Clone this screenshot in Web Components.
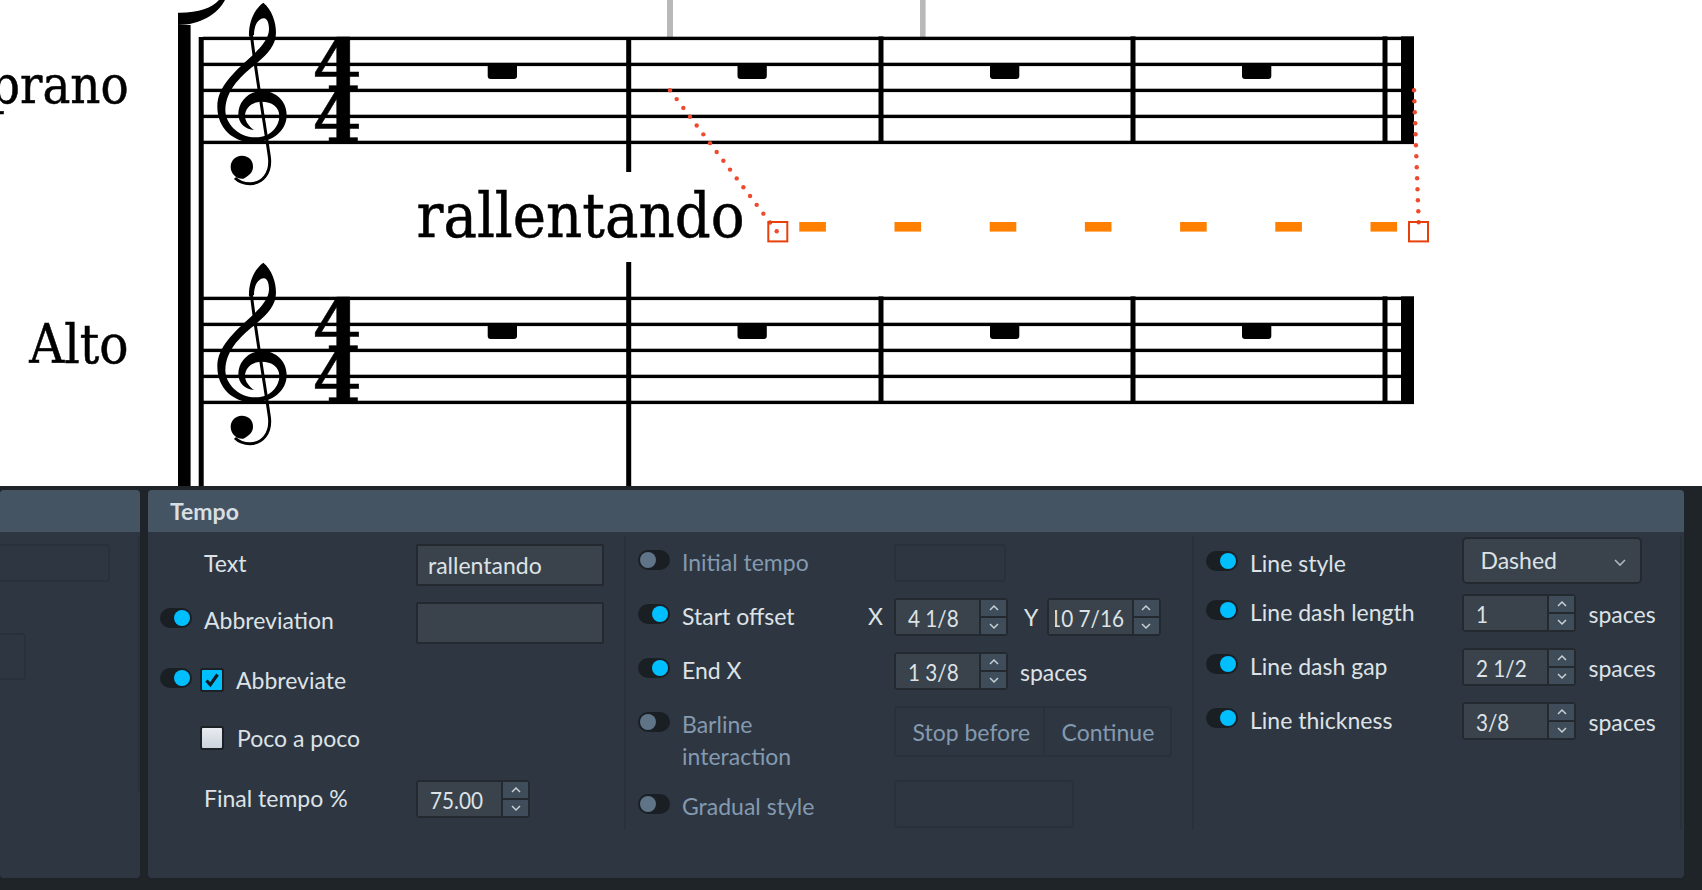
<!DOCTYPE html>
<html>
<head>
<meta charset="utf-8">
<style>
  html, body { margin: 0; height: 100%; overflow: hidden; background: #1f2429; }
  body { font-family: Lato, 'Noto Sans', sans-serif; font-size: 23px; color: #dde2e6; }
  .page { display: flex; flex-direction: column; width: 1702px; height: 890px; overflow: hidden; }
  .dock { display: flex; gap: 8px; padding-top: 4px; height: 388px; padding-right: 18px; }
  .body-l { display: flex; flex-direction: column; }
  .ghost-a { margin: 12px 0 0 -60px; width: 170px; height: 38px; }
  .ghost-b { margin: 51px 0 0 -60px; width: 86px; height: 47px; }
</style>
</head>
<body>
<div class="page">
  <score-view></score-view>
  <div class="dock">
    <dock-panel style="width:140px" rule="256">
      <div class="body-l">
        <field-box class="ghost-a" off></field-box>
        <field-box class="ghost-b" off></field-box>
      </div>
    </dock-panel>
    <dock-panel style="flex:1" title="Tempo">
      <prop-col style="width:476px;--pad:8px" first>
        <prop-row style="--h:42px">
          <span style="margin-bottom:2px">Text</span>
          <field-box slot="field" value="rallentando" style="width:188px;height:42px"></field-box>
        </prop-row>
        <prop-row style="--h:42px;margin-top:16px">
          <prop-toggle slot="toggle" on style="margin-bottom:10px"></prop-toggle>
          <span style="margin-bottom:4px">Abbreviation</span>
          <field-box slot="field" value="" style="width:188px;height:42px"></field-box>
        </prop-row>
        <prop-row style="--h:24px;margin-top:24px">
          <prop-toggle slot="toggle" on style="margin-bottom:4px"></prop-toggle>
          <prop-check checked style="margin:2px 12px 0 -4px"></prop-check>
          <span style="margin-top:2px">Abbreviate</span>
        </prop-row>
        <prop-row style="--h:24px;margin-top:34px">
          <prop-check style="margin:2px 13px 0 -4px"></prop-check>
          <span style="margin-top:2px">Poco a poco</span>
        </prop-row>
        <prop-row style="--h:38px;margin-top:30px">
          <span>Final tempo %</span>
          <spin-box slot="field" value="75.00" style="--tx:12px"></spin-box>
        </prop-row>
      </prop-col>
      <prop-col style="width:568px;--pad:8px">
        <prop-row off>
          <prop-toggle slot="toggle"></prop-toggle>
          <span>Initial tempo</span>
          <field-box slot="field" off style="width:112px;height:38px"></field-box>
        </prop-row>
        <prop-row style="margin-top:16px">
          <prop-toggle slot="toggle" on></prop-toggle>
          <span style="flex:1">Start offset</span>
          <span style="margin-right:11px">X</span>
          <spin-box slot="field" value="4 1/8"></spin-box>
          <span slot="unit" style="display:flex;align-items:center;margin-left:16px">
            <span style="width:22.5px">Y</span>
            <spin-box value="10 7/16" clip></spin-box>
          </span>
        </prop-row>
        <prop-row style="margin-top:16px">
          <prop-toggle slot="toggle" on></prop-toggle>
          <span>End X</span>
          <spin-box slot="field" value="1 3/8"></spin-box>
          <span slot="unit" style="margin:2px 0 0 12px">spaces</span>
        </prop-row>
        <prop-row off top style="--h:51px;margin-top:16px">
          <prop-toggle slot="toggle" style="margin:6px 0 0"></prop-toggle>
          <span style="margin-top:2px">Barline<br>interaction</span>
          <seg-buttons slot="field">
            <span>Stop before</span>
            <span>Continue</span>
          </seg-buttons>
        </prop-row>
        <prop-row off style="--h:48px;margin-top:23px">
          <prop-toggle slot="toggle" style="margin:0"></prop-toggle>
          <span style="margin-top:6px">Gradual style</span>
          <field-box slot="field" off style="width:179.5px;height:48px"></field-box>
        </prop-row>
      </prop-col>
      <prop-col style="flex:1;--pad:1px" last>
        <prop-row style="--h:47px">
          <prop-toggle slot="toggle" on style="margin:0"></prop-toggle>
          <span style="margin-top:6px">Line style</span>
          <drop-down slot="field" value="Dashed"></drop-down>
        </prop-row>
        <prop-row style="margin-top:10px">
          <prop-toggle slot="toggle" on></prop-toggle>
          <span>Line dash length</span>
          <spin-box slot="field" value="1"></spin-box>
          <span slot="unit" style="margin:2px 0 0 12.5px">spaces</span>
        </prop-row>
        <prop-row style="margin-top:16px">
          <prop-toggle slot="toggle" on></prop-toggle>
          <span>Line dash gap</span>
          <spin-box slot="field" value="2 1/2"></spin-box>
          <span slot="unit" style="margin:2px 0 0 12.5px">spaces</span>
        </prop-row>
        <prop-row style="margin-top:16px">
          <prop-toggle slot="toggle" on></prop-toggle>
          <span>Line thickness</span>
          <spin-box slot="field" value="3/8"></spin-box>
          <span slot="unit" style="margin:2px 0 0 12.5px">spaces</span>
        </prop-row>
      </prop-col>
    </dock-panel>
  </div>
</div>

<script>
// treble clef, drawn in a 600x630 box
const CLEF = `
  <path d="M220 38C245 58 258 95 258 128C258 165 232 192 205 215C165 250 108 290 106 360C106 400 145 442 195 442C240 444 268 410 268 378C268 350 245 335 215 335C185 335 165 355 165 378C165 395 178 410 192 420C165 418 145 400 145 372C145 335 175 303 215 303C260 303 290 335 290 375C290 425 245 457 190 457C130 457 82 415 82 350C82 290 135 245 178 205C205 180 237 150 237 118C237 100 232 85 222 85C205 85 192 105 192 135L177 140C175 95 195 55 220 38Z"/>
  <path d="M184 130C190 200 222 390 238 500C245 552 215 581 180 581C160 581 145 574 135 564" fill="none" stroke="#000" stroke-width="9"/>
  <path d="M155 497C178 497 189 512 189 530C189 548 175 558 160 566C140 568 122 552 122 530C122 512 136 497 155 497Z"/>`;

class ScoreView extends HTMLElement {
  constructor() {
    super();
    this.attachShadow({ mode: 'open' });
    const staffs = [38.4, 298.4].map(top => this.staff(top)).join('');
    const dashes = [0,1,2,3,4,5,6].map(i => `<rect x="${799.3 + 95.2*i}" y="222" width="26.6" height="9.6" fill="#ff8000"/>`).join('');
    let dots = '';
    for (let i = 0; i <= 16; i++) dots += `<circle cx="${670 + 6.67*i}" cy="${90.3 + 8.81*i}" r="2.2"/>`;
    for (let i = 0; i <= 12; i++) dots += `<circle cx="${1414 + 0.39*i}" cy="${90.3 + 11*i}" r="2.2"/>`;
    this.shadowRoot.innerHTML = `
      <style>
        :host { display: block; height: 486px; background: #fff; flex: none; overflow: hidden; }
        svg { display: block; }
        text { font-family: 'DejaVu Serif Condensed', 'DejaVu Serif', serif; fill: #000; stroke: #000; stroke-width: .5px; }
        .four { font-family: 'DejaVu Serif', serif; font-weight: 700; font-size: 71px; }
      </style>
      <svg width="1702" height="486" viewBox="0 0 1702 486">
        <rect x="178" y="25" width="12.6" height="461"/>
        <path d="M178 12.7C198 13 212 8 219 0L225 0C218 14 200 25 178 25Z"/>
        <rect x="198.7" y="37" width="5" height="449"/>
        <rect x="667" y="0" width="6" height="38" fill="#b9b9b9"/>
        <rect x="920" y="0" width="5.6" height="38" fill="#b9b9b9"/>
        ${staffs}
        <rect x="626.2" y="37" width="5" height="135"/>
        <rect x="626.2" y="262" width="5" height="224"/>
        <text x="128.6" y="102.7" text-anchor="end" font-size="52">Soprano</text>
        <text x="128.6" y="362.7" text-anchor="end" font-size="54">Alto</text>
        <text x="416.5" y="237" font-size="62.5">rallentando</text>
        ${dashes}
        <g fill="#ee4a2e">${dots}</g>
        <rect x="768.3" y="222" width="19" height="19.4" fill="none" stroke="#e8400c" stroke-width="2"/>
        <rect x="1409" y="222" width="19" height="19.4" fill="none" stroke="#e8400c" stroke-width="2"/>
      </svg>`;
  }

  // five lines, clef, time signature, barlines and rests of one staff
  staff(top) {
    const dy = top === 38.4 ? 0 : 260;
    let s = '';
    for (let i = 0; i < 5; i++) s += `<rect x="203" y="${top - 1.7 + i*26}" width="1211" height="3.4"/>`;
    [878.5, 1130.5, 1382.5].forEach(x => { s += `<rect x="${x}" y="${top - 2}" width="5" height="107.5"/>`; });
    s += `<rect x="1401" y="${top - 2}" width="13" height="107.5"/>`;
    [487.7, 737.5, 990, 1242].forEach(x => {
      s += `<path d="M${x} ${top + 26}h29.3v11.5a3 3 0 0 1 -3 3h-23.3a3 3 0 0 1 -3 -3z"/>`;
    });
    s += `<svg x="190" y="${dy - 10}" width="200" height="210" viewBox="0 0 600 630" overflow="visible">${CLEF}</svg>`;
    s += `<text class="four" x="337" y="${top + 52}" text-anchor="middle">4</text>`;
    s += `<text class="four" x="337" y="${top + 104}" text-anchor="middle">4</text>`;
    return s;
  }
}

class DockPanel extends HTMLElement {
  constructor() {
    super();
    this.attachShadow({ mode: 'open' });
    const title = this.getAttribute('title') || '';
    const rule = this.getAttribute('rule');
    this.shadowRoot.innerHTML = `
      <style>
        :host { display: flex; flex-direction: column; background: #2e3641; border-radius: 4px; overflow: hidden; height: 388px; box-sizing: border-box; }
        .head { height: 42px; flex: none; box-sizing: border-box; padding: 0 0 0 22px; background: #445463; display: flex; align-items: center; font-weight: 700; font-size: 23px; color: #d9dee2; }
        .main { flex: 1; display: flex; min-height: 0; position: relative; }
        .wrap { flex: 1; display: flex; min-width: 0; }
        .rule { width: 2px; height: ${rule || 0}px; margin-top: 4px; background: #29313a; flex: none; }
      </style>
      <div class="head">${title}</div>
      <div class="main"><div class="wrap"><slot></slot></div>${rule ? '<div class="rule"></div>' : ''}</div>`;
  }
}

class PropCol extends HTMLElement {
  constructor() {
    super();
    this.attachShadow({ mode: 'open' });
    this.shadowRoot.innerHTML = `
      <style>
        :host { display: flex; flex-direction: column; box-sizing: border-box; flex: none; height: 294px; margin-top: 4px; padding: var(--pad, 8px) 0 0 12px; }
        :host(:not([first])) { border-left: 2px solid #29313a; }
        :host([last]) { border-right: 2px solid #29313a; margin-right: 2px; }
      </style>
      <slot></slot>`;
  }
}

class PropRow extends HTMLElement {
  constructor() {
    super();
    this.attachShadow({ mode: 'open' });
    this.shadowRoot.innerHTML = `
      <style>
        :host { display: grid; grid-template-columns: 44px 212px auto auto; grid-template-rows: var(--h, 38px); justify-content: start; align-items: center; height: var(--h, 38px); line-height: 32px; }
        :host([off]) { color: #839ab0; }
        :host([top]) { align-items: start; }
        .c { display: flex; height: 100%; align-items: center; }
        :host([top]) .c { align-items: flex-start; }
        .l { white-space: nowrap; box-sizing: border-box; padding-bottom: 2px; }
      </style>
      <div class="c"><slot name="toggle"></slot></div>
      <div class="c l"><slot></slot></div>
      <div class="c"><slot name="field"></slot></div>
      <div class="c"><slot name="unit"></slot></div>`;
  }
}

class PropToggle extends HTMLElement {
  constructor() {
    super();
    this.attachShadow({ mode: 'open' });
    this.shadowRoot.innerHTML = `
      <style>
        :host { display: flex; width: 32px; height: 20px; margin-bottom: 6px; box-sizing: border-box; padding: 2px; background: #1a1f24; border-radius: 10px; flex: none; }
        :host([on]) { justify-content: flex-end; }
        i { display: block; width: 16px; height: 16px; border-radius: 50%; background: #607488; }
        :host([on]) i { background: #00bfff; }
      </style>
      <i></i>`;
  }
}

class PropCheck extends HTMLElement {
  constructor() {
    super();
    this.attachShadow({ mode: 'open' });
    this.shadowRoot.innerHTML = `
      <style>
        :host { display: block; width: 24px; height: 24px; box-sizing: border-box; border: 2px solid #1c2126; border-radius: 3px; background: linear-gradient(#e8ebf0, #ccd3dd); flex: none; }
        :host([checked]) { background: #00bfff; }
        svg { display: none; }
        :host([checked]) svg { display: block; }
      </style>
      <svg width="20" height="20" viewBox="0 0 20 20"><path d="M4.5 10.5l3.8 4.2L15.5 4.5" fill="none" stroke="#14191e" stroke-width="3.2"/></svg>`;
  }
}

class FieldBox extends HTMLElement {
  constructor() {
    super();
    this.attachShadow({ mode: 'open' });
    this.shadowRoot.innerHTML = `
      <style>
        :host { display: flex; align-items: center; box-sizing: border-box; padding: 0 0 0 10px; background: #3a424c; border: 2px solid #23292f; border-radius: 2px; flex: none; }
        :host([off]) { background: none; border-color: #29313a; border-radius: 4px; }
      </style>
      ${this.getAttribute('value') || ''}`;
  }
}

class SpinBox extends HTMLElement {
  constructor() {
    super();
    this.attachShadow({ mode: 'open' });
    const chev = d => `<svg width="12" height="8" viewBox="0 0 12 8"><path d="${d}" fill="none" stroke="#c9d0d6" stroke-width="1.5"/></svg>`;
    this.shadowRoot.innerHTML = `
      <style>
        :host { display: flex; width: 114px; height: 38px; box-sizing: border-box; border: 2px solid #23292f; border-radius: 4px; background: #23292f; flex: none; }
        .val { flex: 1; display: flex; align-items: center; background: #3a424c; min-width: 0; padding: 2px 0 0 var(--tx, 12px); white-space: nowrap; }
        :host([clip]) .val { padding: 2px 8px 0 6px; }
        .clip { flex: 1; min-width: 0; display: flex; overflow: hidden; }
        :host([clip]) .clip { justify-content: flex-end; }
        .txt { flex: none; transform: scaleX(.9); transform-origin: left; }
        :host([clip]) .txt { transform-origin: right; }
        .btns { width: 25px; margin-left: 2px; display: flex; flex-direction: column; gap: 2px; flex: none; }
        .btns span { flex: 1; display: flex; align-items: center; justify-content: center; background: #3f4c59; }
      </style>
      <div class="val"><div class="clip"><span class="txt">${this.getAttribute('value') || ''}</span></div></div>
      <div class="btns"><span>${chev('M2 6l4-4 4 4')}</span><span>${chev('M2 2l4 4 4-4')}</span></div>`;
  }
}

class SegButtons extends HTMLElement {
  constructor() {
    super();
    this.attachShadow({ mode: 'open' });
    this.shadowRoot.innerHTML = `
      <style>
        :host { display: flex; align-items: center; width: 277.5px; height: 51px; box-sizing: border-box; border: 2px solid #29313a; border-radius: 4px; flex: none; }
        ::slotted(span) { display: flex; align-items: center; height: 100%; box-sizing: border-box; padding-left: 16.5px; }
        ::slotted(span:first-child) { width: 149px; border-right: 2px solid #29313a; }
      </style>
      <slot></slot>`;
  }
}

class DropDown extends HTMLElement {
  constructor() {
    super();
    this.attachShadow({ mode: 'open' });
    this.shadowRoot.innerHTML = `
      <style>
        :host { display: flex; align-items: center; justify-content: space-between; width: 180px; height: 47px; box-sizing: border-box; padding: 0 13px 2px 16.5px; background: #3a424c; border: 2px solid #23292f; border-radius: 5px; flex: none; }
      </style>
      <span>${this.getAttribute('value') || ''}</span>
      <svg width="14" height="10" viewBox="0 0 14 10" style="margin-top:6px"><path d="M2 2l5 5 5-5" fill="none" stroke="#aeb6bd" stroke-width="1.6"/></svg>`;
  }
}

customElements.define('score-view', ScoreView);
customElements.define('dock-panel', DockPanel);
customElements.define('prop-col', PropCol);
customElements.define('prop-row', PropRow);
customElements.define('prop-toggle', PropToggle);
customElements.define('prop-check', PropCheck);
customElements.define('field-box', FieldBox);
customElements.define('spin-box', SpinBox);
customElements.define('seg-buttons', SegButtons);
customElements.define('drop-down', DropDown);
</script>
</body>
</html>
